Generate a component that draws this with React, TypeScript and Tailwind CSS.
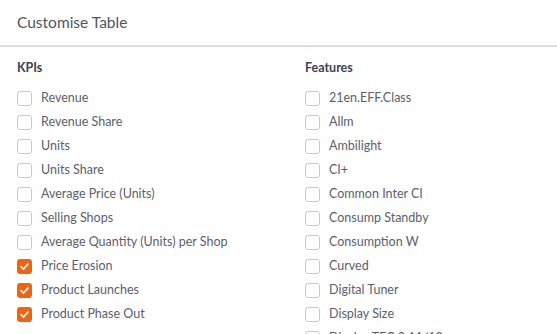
const kpis = [
    { label: "Revenue", checked: false },
    { label: "Revenue Share", checked: false },
    { label: "Units", checked: false },
    { label: "Units Share", checked: false },
    { label: "Average Price (Units)", checked: false },
    { label: "Selling Shops", checked: false },
    { label: "Average Quantity (Units) per Shop", checked: false },
    { label: "Price Erosion", checked: true },
    { label: "Product Launches", checked: true },
    { label: "Product Phase Out", checked: true },
];

const features = [
    "21en.EFF.Class",
    "Allm",
    "Ambilight",
    "CI+",
    "Common Inter CI",
    "Consump Standby",
    "Consumption W",
    "Curved",
    "Digital Tuner",
    "Display Size",
    "Display TFC 3 11/12",
];

const Check = ({ checked }: { checked: boolean }) =>
    checked ? (
        <span className="w-[15px] h-[15px] rounded-[3px] bg-[#ec6414] flex items-center justify-center shrink-0">
            <svg width="11" height="11" viewBox="0 0 12 12" fill="none">
                <path d="M2.3 6.2 L5 8.8 L9.8 3.4" stroke="white" strokeWidth="1.8" strokeLinecap="round" strokeLinejoin="round" />
            </svg>
        </span>
    ) : (
        <span className="w-[15px] h-[15px] rounded-[3px] border border-[#c5c8cf] bg-white shrink-0" />
    );

const Row = ({ label, checked }: { label: string; checked: boolean }) => (
    <div className="flex items-center h-6 gap-[9px]">
        <Check checked={checked} />
        <span className="text-[12.5px] text-[#5b606c] whitespace-nowrap">{label}</span>
    </div>
);

const App = () => {
    return (
        <div className="w-[557px] h-[334px] overflow-hidden bg-white" style={{ fontFamily: "Lato, 'Open Sans', sans-serif" }}>
            <div className="h-[47px] flex items-center pl-[17px] border-b-2 border-[#dcdce4]">
                <h1 className="text-[15.5px] text-[#4f5463]">Customise Table</h1>
            </div>
            <div className="flex pl-[17px] pt-[11px]">
                <div className="w-[288px]">
                    <h2 className="text-[12.5px] font-bold text-[#3d424e] h-[20px] flex items-center">KPIs</h2>
                    <div className="mt-[8px]">
                        {kpis.map((k) => (
                            <Row key={k.label} label={k.label} checked={k.checked} />
                        ))}
                    </div>
                </div>
                <div>
                    <h2 className="text-[12.5px] font-bold text-[#3d424e] h-[20px] flex items-center">Features</h2>
                    <div className="mt-[8px]">
                        {features.map((f) => (
                            <Row key={f} label={f} checked={false} />
                        ))}
                    </div>
                </div>
            </div>
        </div>
    );
};

export default App;
